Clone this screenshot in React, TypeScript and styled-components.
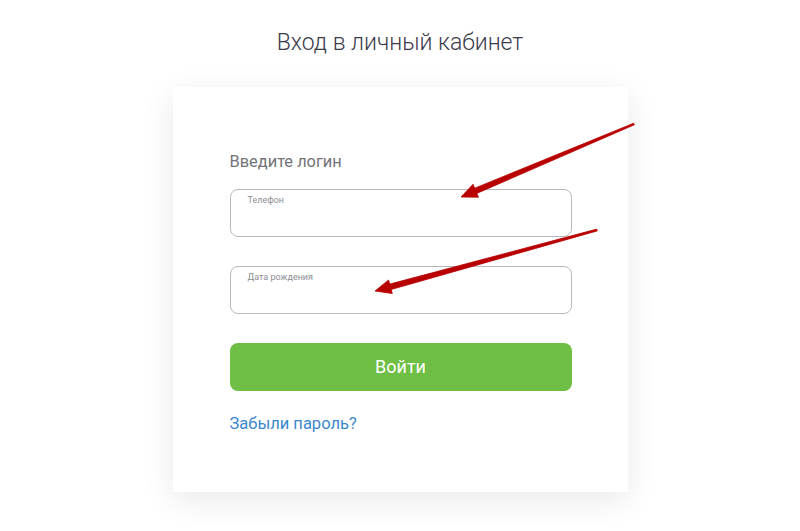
import styled, { createGlobalStyle } from 'styled-components'

const GlobalStyle = createGlobalStyle`
  html, body {
    margin: 0;
    padding: 0;
    background: #ffffff;
    font-family: Roboto, "Liberation Sans", Arial, sans-serif;
  }
  * {
    box-sizing: border-box;
  }
`

const Page = styled.div`
  position: relative;
  width: 800px;
  min-height: 531px;
  margin: 0 auto;
  display: flex;
  flex-direction: column;
  align-items: center;
  padding-top: 29px;
`

const Title = styled.h1`
  margin: 0;
  font-size: 23px;
  line-height: 28px;
  font-weight: 300;
  color: #3b3b4a;
`

const Card = styled.div`
  margin-top: 30px;
  width: 455px;
  padding: 65px 56px 58px 57px;
  background: #ffffff;
  box-shadow: 0 8px 30px rgba(0, 0, 0, 0.09);
  display: flex;
  flex-direction: column;
`

const Heading = styled.div`
  font-size: 16.4px;
  line-height: 20px;
  color: #737378;
  margin-bottom: 17px;
`

const Field = styled.label<{ $gap?: number }>`
  display: block;
  height: 48px;
  border: 1px solid #b9b9bd;
  border-radius: 8px;
  padding: 5px 17px 0;
  margin-bottom: ${(p) => p.$gap ?? 29}px;
`

const FieldLabel = styled.span`
  display: block;
  font-size: 9px;
  line-height: 11px;
  color: #8d8d95;
`

const Button = styled.button`
  height: 48px;
  border: none;
  border-radius: 8px;
  background: #6fbe45;
  color: #ffffff;
  font-family: inherit;
  font-size: 18px;
  font-weight: 400;
  padding: 0 0 2px;
  cursor: pointer;
`

const Link = styled.a`
  margin-top: 23px;
  font-size: 16.5px;
  line-height: 20px;
  color: #3b87cc;
  text-decoration: none;
  align-self: flex-start;
`

const Overlay = styled.svg`
  position: absolute;
  left: 0;
  top: 0;
  pointer-events: none;
`

type Pt = [number, number]

// tapered hand-drawn style arrow from tail to tip
const arrowPoints = (tail: Pt, tip: Pt) => {
  const dx = tip[0] - tail[0]
  const dy = tip[1] - tail[1]
  const len = Math.hypot(dx, dy)
  const ux = dx / len
  const uy = dy / len
  const nx = uy
  const ny = -ux
  const headLen = 16
  const headW = 7
  const shaftW = 2.8
  const tailW = 0.9
  const bx = tip[0] - ux * headLen
  const by = tip[1] - uy * headLen
  const pts: Pt[] = [
    [tail[0] + nx * tailW, tail[1] + ny * tailW],
    [bx + nx * shaftW, by + ny * shaftW],
    [bx + nx * headW, by + ny * headW],
    tip,
    [bx - nx * headW, by - ny * headW],
    [bx - nx * shaftW, by - ny * shaftW],
    [tail[0] - nx * tailW, tail[1] - ny * tailW],
  ]
  return pts.map((p) => `${p[0].toFixed(1)},${p[1].toFixed(1)}`).join(' ')
}

const arrows: [Pt, Pt][] = [
  [[634, 124], [461, 197]],
  [[597, 230], [375, 291]],
]

export default function App() {
  return (
    <>
      <GlobalStyle />
      <Page>
        <Title>Вход в личный кабинет</Title>
        <Card>
          <Heading>Введите логин</Heading>
          <Field>
            <FieldLabel>Телефон</FieldLabel>
          </Field>
          <Field>
            <FieldLabel>Дата рождения</FieldLabel>
          </Field>
          <Button>Войти</Button>
          <Link href="#">Забыли пароль?</Link>
        </Card>
        <Overlay width="800" height="531" viewBox="0 0 800 531">
          {arrows.map(([tail, tip], i) => (
            <polygon
              key={i}
              points={arrowPoints(tail, tip)}
              fill="#b80000"
              stroke="#b80000"
              strokeWidth="0.8"
              strokeLinejoin="round"
            />
          ))}
        </Overlay>
      </Page>
    </>
  )
}
